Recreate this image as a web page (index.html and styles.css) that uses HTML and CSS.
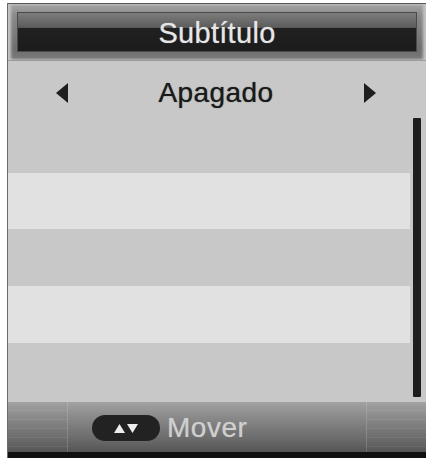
FILE: index.html
```html
<!DOCTYPE html>
<html lang="pt">
<head>
<meta charset="utf-8">
<title>Subtítulo</title>
<link rel="stylesheet" href="styles.css">
</head>
<body>
<div class="frame">
  <div class="title">
    <div class="title-box">Subtítulo</div>
  </div>
  <div class="content">
    <div class="option">
      <span class="arrow arrow-left"></span>
      <span class="option-text">Apagado</span>
      <span class="arrow arrow-right"></span>
    </div>
    <div class="list">
      <div class="rows">
        <div class="row dark"></div>
        <div class="row light"></div>
        <div class="row dark"></div>
        <div class="row light"></div>
        <div class="row dark"></div>
      </div>
      <div class="scroll"><div class="thumb"></div></div>
    </div>
  </div>
  <div class="footer">
    <div class="side side-left"></div>
    <div class="middle">
      <span class="pill">
        <svg width="26" height="11" viewBox="0 0 26 11"><polygon points="1,10 6.5,1 12,10" fill="#eeeeee"/><polygon points="14,1 25,1 19.5,10" fill="#eeeeee"/></svg>
      </span>
      <span class="mover">Mover</span>
    </div>
    <div class="side side-right"></div>
  </div>
</div>
</body>
</html>
```

FILE: styles.css
```css
html, body {
  margin: 0;
  padding: 0;
  background: #ffffff;
}

body {
  font-family: "Liberation Sans", Arial, sans-serif;
}

.frame {
  margin: 3px 8px 0 7px;
  width: 419px;
  display: flex;
  flex-direction: column;
  box-sizing: border-box;
  border-left: 1px solid #6a6a6a;
}

.title {
  height: 57px;
  box-sizing: border-box;
  border-top: 1px solid #555555;
  padding: 8px 9px 8px 9px;
  background: linear-gradient(#a6a6a6 0%, #8a8a8a 20%, #6e6e6e 80%, #7a7a7a 100%);
  box-shadow: inset 3px 0 3px #c4c4c4, inset -3px 0 3px #c4c4c4;
}

.title-box {
  height: 40px;
  box-sizing: border-box;
  border: 1px solid #4a4a4a;
  background: linear-gradient(#7c7c7c 0%, #5c5c5c 38%, #202020 40%, #1c1c1c 100%);
  color: #e6e6e6;
  font-size: 29px;
  line-height: 40px;
  text-align: center;
  letter-spacing: 0.3px;
  text-shadow: 0 0 1px rgba(230,230,230,0.6);
}

.content {
  height: 342px;
  background: #c8c8c8;
  display: flex;
  flex-direction: column;
  border-top: 1px solid #9a9a9a;
  box-sizing: border-box;
}

.option {
  height: 55px;
  box-sizing: border-box;
  display: flex;
  align-items: center;
  padding: 8px 50px 0 48px;
}

.option-text {
  flex: 1;
  text-align: center;
  color: #1a1a1a;
  font-size: 28px;
  letter-spacing: 0.4px;
  text-shadow: 0 0 1px rgba(20,20,20,0.7);
}

.arrow {
  width: 0;
  height: 0;
  border-top: 10px solid transparent;
  border-bottom: 10px solid transparent;
}

.arrow-left {
  border-right: 12px solid #1e1e1e;
}

.arrow-right {
  border-left: 12px solid #1e1e1e;
}

.list {
  flex: 1;
  display: flex;
}

.rows {
  width: 402px;
  display: flex;
  flex-direction: column;
}

.row {
  flex: 1;
}

.row.dark {
  background: #c8c8c8;
}

.row.light {
  background: #e1e1e1;
}

.row:last-child {
  flex: 1.05;
}

.scroll {
  flex: 1;
  padding: 2px 0 5px 3px;
  display: flex;
}

.thumb {
  width: 8px;
  background: #1e1e1e;
  border-radius: 1px;
}

.footer {
  height: 56px;
  box-sizing: border-box;
  border-bottom: 6px solid #111111;
  background: linear-gradient(#a2a2a2 0%, #8a8a8a 30%, #6a6a6a 75%, #555555 100%);
  display: flex;
}

.side {
  width: 59px;
  background: repeating-linear-gradient(180deg, rgba(255,255,255,0) 0px, rgba(255,255,255,0) 8px, rgba(255,255,255,0.07) 8px, rgba(255,255,255,0.07) 9px);
}

.side-left {
  border-right: 1px solid rgba(255,255,255,0.15);
}

.side-right {
  border-left: 1px solid rgba(255,255,255,0.15);
}

.middle {
  flex: 1;
  display: flex;
  align-items: center;
  padding-left: 24px;
  padding-top: 2px;
}

.pill {
  width: 68px;
  height: 26px;
  border-radius: 13px;
  background: #222222;
  display: flex;
  align-items: center;
  justify-content: center;
}

.mover {
  margin-left: 7px;
  color: #cfcfcf;
  font-size: 28px;
  letter-spacing: 0.5px;
  text-shadow: 0 0 1px rgba(207,207,207,0.6);
}
```
